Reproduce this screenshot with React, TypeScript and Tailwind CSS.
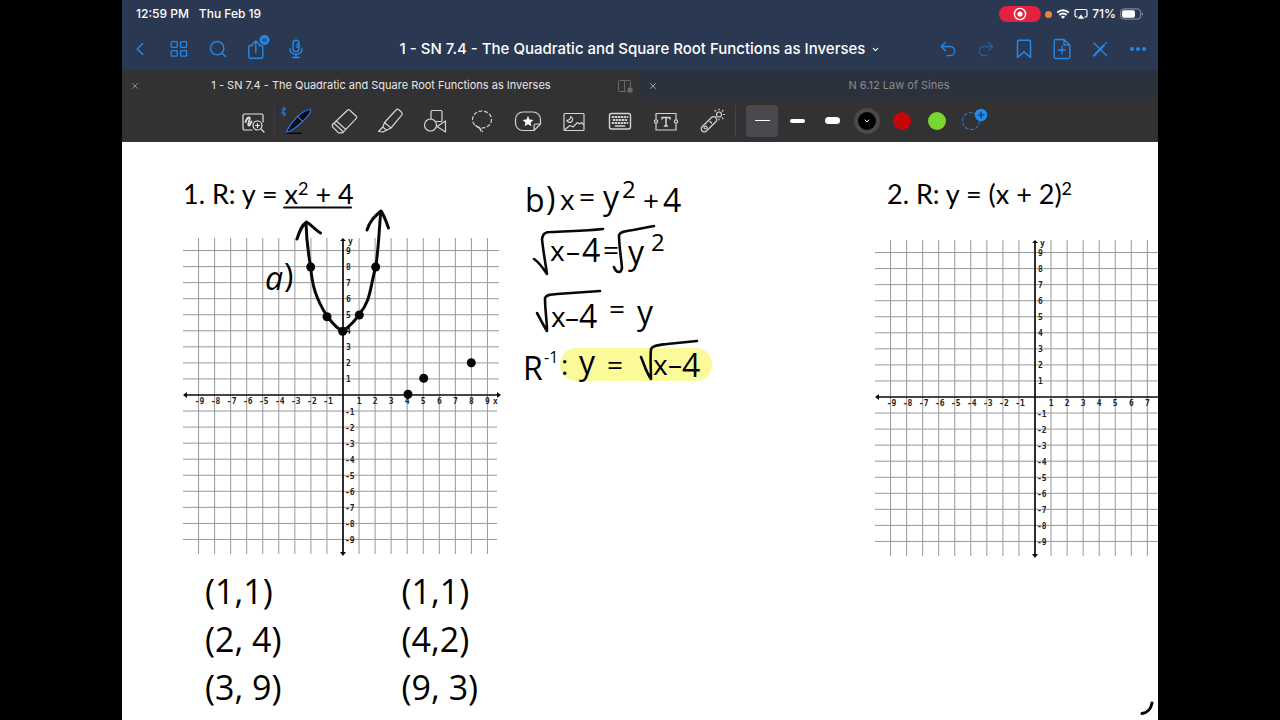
import type { ReactNode } from "react";
import { ChevronDown, ChevronLeft, Redo2, Search, Undo2, X } from "lucide-react";

const NavButton = ({ label, children }: { label: string; children: ReactNode }) => (
  <button aria-label={label} className="flex h-9 w-9 items-center justify-center text-[#2488e6]">
    {children}
  </button>
);

const ToolButton = ({ label, children }: { label: string; children: ReactNode }) => (
  <button aria-label={label} className="flex h-8 w-[46px] items-center justify-center text-[#d4d4d6]">
    {children}
  </button>
);

const Drawing = ({ children }: { children: ReactNode }) => (
  <svg
    width="32"
    height="32"
    viewBox="0 0 32 32"
    fill="none"
    stroke="currentColor"
    strokeWidth="1.2"
    strokeLinecap="round"
    strokeLinejoin="round"
  >
    {children}
  </svg>
);

const StatusBar = () => (
  <div className="flex h-7 items-center justify-between px-3.5 text-xs font-medium text-white">
    <div className="flex gap-2.5">
      <span>12:59 PM</span>
      <span>Thu Feb 19</span>
    </div>
    <div className="flex items-center gap-1">
      <span className="flex h-4 w-[42px] items-center justify-center rounded-full bg-[#e5223f]">
        <svg width="14" height="14" viewBox="0 0 14 14" fill="none" stroke="white" strokeWidth="1.4">
          <circle cx="7" cy="7" r="5.6" />
          <circle cx="7" cy="7" r="2.6" fill="white" stroke="none" />
        </svg>
      </span>
      <span className="h-[7px] w-[7px] rounded-full bg-[#e8843c]" />
      <svg width="14" height="12" viewBox="0 0 14 12" fill="none" stroke="white" strokeWidth="1.8">
        <path d="M1.2 4.6a8.3 8.3 0 0 1 11.6 0M3.4 7a5.1 5.1 0 0 1 7.2 0" />
        <path d="M7 10.8 4.9 8.9a3 3 0 0 1 4.2 0z" fill="white" stroke="none" />
      </svg>
      <svg width="14" height="12" viewBox="0 0 14 12" fill="none" stroke="white" strokeWidth="1.2">
        <path d="M3.6 9H2.4A1.4 1.4 0 0 1 1 7.6V2.9A1.4 1.4 0 0 1 2.4 1.5h9.2A1.4 1.4 0 0 1 13 2.9v4.7A1.4 1.4 0 0 1 11.6 9h-1.2" />
        <path d="m7 6.600 3.200 4.200H3.800z" fill="white" stroke="none" />
      </svg>
      <span>71%</span>
      <svg width="24" height="12" viewBox="0 0 24 12">
        <rect x="0.6" y="0.9" width="20" height="10.2" rx="3.2" fill="none" stroke="#8d96a5" />
        <rect x="2" y="2.3" width="13" height="7.4" rx="2" fill="white" />
        <path d="M22 4.200v3.600a2 2 0 0 0 0-3.600" fill="#8d96a5" />
      </svg>
    </div>
  </div>
);

const NavBar = () => (
  <nav className="grid h-[42px] grid-cols-[1fr_auto_1fr] items-center">
    <div className="flex gap-[3px]">
      <NavButton label="Back">
        <ChevronLeft size={22} strokeWidth={1.6} />
      </NavButton>
      <NavButton label="Thumbnails">
        <svg width="18" height="18" viewBox="0 0 18 18" fill="none" stroke="currentColor" strokeWidth="1.3">
          <rect x="1.2" y="1.7" width="6" height="5.6" rx="0.8" />
          <rect x="10.6" y="1.7" width="6" height="5.6" rx="0.8" />
          <rect x="1.2" y="10.6" width="6" height="5.6" rx="0.8" />
          <rect x="10.6" y="10.6" width="6" height="5.6" rx="0.8" />
        </svg>
      </NavButton>
      <NavButton label="Search">
        <Search size={20} strokeWidth={1.7} />
      </NavButton>
      <NavButton label="Share">
        <svg width="30" height="30" viewBox="0 0 30 30" fill="none" stroke="currentColor" strokeWidth="1.4" strokeLinecap="round" strokeLinejoin="round">
          <path d="M10.500 11.500H8.300a1.500 1.500 0 0 0-1.500 1.500v9.300a2 2 0 0 0 2 2h10a2 2 0 0 0 2-2V13a1.500 1.500 0 0 0-1.500-1.500h-2.200M13.800 18.500V7.200M10.500 10.200l3.300-3.300 3.300 3.300" />
          <circle cx="22.5" cy="6" r="5" fill="#2488e6" stroke="none" />
          <path d="M20.500 5h4M20.500 7h4" stroke="#2a3852" strokeWidth="1" />
        </svg>
      </NavButton>
      <NavButton label="Record audio">
        <svg width="16" height="20" viewBox="0 0 16 20" fill="none" stroke="currentColor" strokeWidth="1.4" strokeLinecap="round">
          <rect x="5" y="1.3" width="6" height="11.4" rx="3" />
          <path d="M2 9.500v.8a6 5.200 0 0 0 12 0v-.8M8 15.600v2.800M4.500 18.500h7M8.500 5.500h2M8.500 8h2" />
        </svg>
      </NavButton>
    </div>
    <h1 className="flex items-center gap-1.5 text-[15px] font-medium text-white">
      1 - SN 7.4 - The Quadratic and Square Root Functions as Inverses
      <ChevronDown size={9} strokeWidth={3} />
    </h1>
    <div className="flex justify-end gap-[2px] pr-[2px]">
      <NavButton label="Undo">
        <Undo2 size={20} strokeWidth={1.6} />
      </NavButton>
      <NavButton label="Redo">
        <Redo2 size={20} strokeWidth={1.6} className="text-[#275d99]" />
      </NavButton>
      <NavButton label="Bookmark">
        <svg width="16" height="20" viewBox="0 0 16 20" fill="none" stroke="currentColor" strokeWidth="1.5" strokeLinejoin="round">
          <path d="M1.500 2.500a1.300 1.300 0 0 1 1.300-1.300h10.400a1.300 1.300 0 0 1 1.300 1.300v16L8 12.700l-6.500 5.800z" />
        </svg>
      </NavButton>
      <NavButton label="Add page">
        <svg width="18" height="22" viewBox="0 0 18 22" fill="none" stroke="currentColor" strokeWidth="1.4" strokeLinecap="round" strokeLinejoin="round">
          <path d="M11 1.500H3A1.800 1.800 0 0 0 1.200 3.300v15.400A1.800 1.800 0 0 0 3 20.500h12a1.800 1.800 0 0 0 1.800-1.800V7zV7h5.800M9 8.500v7M5.500 12h7" />
        </svg>
      </NavButton>
      <NavButton label="Read only mode">
        <svg width="18" height="18" viewBox="0 0 18 18" fill="none" stroke="currentColor" strokeLinecap="round">
          <path d="M3 3l12.500 12.500" strokeWidth="1.4" />
          <path d="M4 14.500 13 5.200" strokeWidth="2.2" />
          <path d="M2.500 16l1.500-1.500M14.600 3.500l.6-.6" strokeWidth="1.6" />
        </svg>
      </NavButton>
      <NavButton label="More">
        <svg width="18" height="6" viewBox="0 0 18 6" fill="currentColor">
          <circle cx="3" cy="3" r="2" />
          <circle cx="9" cy="3" r="2" />
          <circle cx="15" cy="3" r="2" />
        </svg>
      </NavButton>
    </div>
  </nav>
);

const Tabs = () => (
  <div className="grid h-[29px] grid-cols-2 bg-[#323133] text-[11px]">
    <div className="grid grid-cols-[32px_1fr_32px] items-center pt-0.5 text-[#e6e6e8]">
      <button aria-label="Close tab" className="flex pl-2 text-[#9b9b9d]">
        <X size={10} strokeWidth={2} />
      </button>
      <a href="#quadratic" className="text-center">
        1 - SN 7.4 - The Quadratic and Square Root Functions as Inverses
      </a>
      <button aria-label="Split view" className="pl-2 text-[#69696c]">
        <svg width="18" height="14" viewBox="0 0 18 14" fill="none" stroke="currentColor">
          <path d="M14.500 8V2.500a1 1 0 0 0-1-1h-10a1 1 0 0 0-1 1v9a1 1 0 0 0 1 1H10M8.500 1.500v11" />
          <circle cx="14" cy="11" r="2.7" fill="currentColor" stroke="none" />
        </svg>
      </button>
    </div>
    <div className="grid grid-cols-[32px_1fr_32px] items-center rounded-bl-md bg-[#2c323d] pt-0.5 text-[#858b95]">
      <button aria-label="Close tab" className="flex pl-2 text-[#b0b4ba]">
        <X size={10} strokeWidth={2} />
      </button>
      <a href="#sines" className="text-center">
        N 6.12 Law of Sines
      </a>
    </div>
  </div>
);

const Toolbar = () => (
  <div className="flex h-[43px] items-center bg-[#323133] pl-[110px]">
    <button aria-label="Zoom window" className="flex h-8 w-[42px] items-center justify-center text-[#e4e4e6]">
      <Drawing>
        <path d="M15 25H7.500A1.500 1.500 0 0 1 6 23.500v-13A1.500 1.500 0 0 1 7.500 9h17a1.500 1.500 0 0 1 1.500 1.500V17" />
        <path d="M8.500 17c1-3 2.500-4.500 3.500-4.500s1 1.500 0 4-1 4 0 4 1.500-2 2.500-4" strokeWidth="1.8" />
        <circle cx="20.5" cy="20.5" r="4.5" />
        <path d="m24 24 3 3M18.500 20.500h4M20.500 18.500v4" />
      </Drawing>
    </button>
    <span className="h-8 w-px bg-[#3b3a3d]" />
    <ToolButton label="Pen">
      <svg width="36" height="32" viewBox="0 0 36 32" fill="none" strokeLinecap="round" strokeLinejoin="round">
        <path d="M1.500 4.500 5.500 9 3.500 11V2l2 2.200-4 4.300" stroke="#2a6fd6" strokeWidth="1.1" />
        <path d="M6.500 27.500C7.500 24 11 18.500 16 13 21.500 7 28.500 3.500 30.500 4.800 31.500 6.800 27 12.500 21.500 17.500 15.500 23 10 27 6.500 27.500z" fill="#060c18" stroke="#2b76dd" strokeWidth="1.2" />
        <path d="m18 11.500 4 4.500" stroke="#7fa7e8" strokeWidth="1" />
        <path d="M7 28.300h14" stroke="#0a0a0a" strokeWidth="1.4" />
      </svg>
    </ToolButton>
    <ToolButton label="Eraser">
      <Drawing>
        <path d="M19.500 5.200a1.600 1.600 0 0 1 2.300 0l6.500 6a1.600 1.600 0 0 1 0 2.200L14.500 27.800h-4L4.300 21.500v-1.800zM8 15.800l9.800 8.700M6 18.200l9.500 8.800" />
      </Drawing>
    </ToolButton>
    <ToolButton label="Highlighter">
      <Drawing>
        <path d="m10.500 17.500 11.500-12.500a2 2 0 0 1 2.800-.2l2.700 2.500a2 2 0 0 1 .2 2.800L17 23zM10.500 17.500 8.800 22l3.700 3.200 4.500-2.200M8.800 22l-4.300 4.500 5 .3 3-1.600" />
      </Drawing>
    </ToolButton>
    <ToolButton label="Shapes">
      <Drawing>
        <path d="M11 14V6.500a1 1 0 0 1 1-1h9a1 1 0 0 1 1 1v9a1 1 0 0 1-1 1h-4.500" />
        <circle cx="10.5" cy="20" r="6" />
        <path d="M25.500 16v11l-8.500-5.500z" />
      </Drawing>
    </ToolButton>
    <ToolButton label="Lasso">
      <Drawing>
        <ellipse cx="16" cy="14.5" rx="9.5" ry="8.5" strokeDasharray="3 2.600" />
        <path d="M9.500 20.500c3 1 5 3 5.500 6.500M13 22.500l3.500 4" strokeDasharray="3 2" />
      </Drawing>
    </ToolButton>
    <ToolButton label="Elements">
      <Drawing>
        <path d="M22 25.500H11A7.500 7.500 0 0 1 3.500 18v-3.500A7.500 7.500 0 0 1 11 7h10a7.500 7.500 0 0 1 7.500 7.500V19zM22 25.500V21a2 2 0 0 1 2-2h4.500" />
        <path d="m16 11 1.600 3.500 3.800.4-2.900 2.600.9 3.700-3.400-1.900-3.400 1.900.9-3.700-2.900-2.600 3.800-.4z" fill="white" stroke="none" />
      </Drawing>
    </ToolButton>
    <ToolButton label="Image">
      <Drawing>
        <rect x="6" y="8.500" width="20" height="17" rx="1" />
        <path d="m7 24.500 5-4 3 1.500 4.500-4.500 2 1.500 2-1.500 2 2M12.500 11.500a3 3 0 1 1-3.700 3.800c2.500.3 3.800-1.500 3.700-3.800z" />
      </Drawing>
    </ToolButton>
    <ToolButton label="Keyboard">
      <Drawing>
        <rect x="5.5" y="8.500" width="21" height="15.5" rx="2" strokeWidth="1.4" />
        <path d="M8.500 12h15M9.500 15h14M8.500 18h15" strokeWidth="1.9" strokeDasharray="0.900 2.100" />
        <path d="M11.500 21h9" strokeWidth="1.7" />
      </Drawing>
    </ToolButton>
    <ToolButton label="Text box">
      <Drawing>
        <path d="M6 14V8.500h20V14M6 19v6h20v-6" />
        <path d="M12 12.500h8M16 12.500v8.500M12 12.500v1.500M20 12.500v1.500M14.500 21h3" strokeWidth="1.5" />
        <circle cx="6" cy="16.5" r="1.6" />
        <circle cx="26" cy="16.5" r="1.6" />
      </Drawing>
    </ToolButton>
    <ToolButton label="Laser pointer">
      <Drawing>
        <path d="M15.500 12.500a3 3 0 0 1 4.300 0 3 3 0 0 1 0 4.300L10.500 26a3 3 0 0 1-4.400 0 3 3 0 0 1 0-4.300z" />
        <circle cx="9.500" cy="22.5" r="1.5" />
        <circle cx="23" cy="9.500" r="2.5" />
        <path d="M23 4v1M27 5.500l-.7.700M28.500 9.500h-1M27 13.500l-.7-.7M19 5.500l.7.700M14 16.500l1.500 1.500M23 14v.8" />
      </Drawing>
    </ToolButton>
    <span className="h-8 w-px bg-[#464548]" />
    <div className="ml-2.5 flex items-center gap-[3px]">
      <button aria-label="Thin stroke" className="flex h-8 w-8 items-center justify-center rounded bg-[#4a494d]">
        <span className="h-px w-[15px] bg-white" />
      </button>
      <button aria-label="Medium stroke" className="flex h-8 w-8 items-center justify-center">
        <span className="h-1 w-[15px] rounded-full bg-white" />
      </button>
      <button aria-label="Thick stroke" className="flex h-8 w-8 items-center justify-center">
        <span className="h-[7px] w-[15px] rounded-full bg-white" />
      </button>
      <button aria-label="Black" className="flex h-8 w-8 items-center justify-center">
        <span className="flex h-[26px] w-[26px] items-center justify-center rounded-full border-4 border-[#4a494c] bg-black text-white">
          <ChevronDown size={8} strokeWidth={3} />
        </span>
      </button>
      <button aria-label="Red" className="flex h-8 w-8 items-center justify-center">
        <span className="h-[18px] w-[18px] rounded-full bg-[#c40606]" />
      </button>
      <button aria-label="Green" className="flex h-8 w-8 items-center justify-center">
        <span className="h-[18px] w-[18px] rounded-full bg-[#77d62f]" />
      </button>
      <button aria-label="Add colour" className="flex h-8 w-8 items-center justify-center">
        <Drawing>
          <circle cx="15" cy="16" r="8.500" stroke="#2b6fc0" strokeDasharray="3 2.400" />
          <circle cx="25" cy="10" r="6.2" fill="#1f8cf2" stroke="none" />
          <path d="M22 10h6M25 7v6" stroke="#16324f" />
        </Drawing>
      </button>
    </div>
  </div>
);

const ticks = [-9, -8, -7, -6, -5, -4, -3, -2, -1, 1, 2, 3, 4, 5, 6, 7, 8, 9];
const step = 16.05;

// Coordinate plane with its origin at 160,158. xMax is the last number on the x axis.
const Plane = ({ label, xMax = 9, children }: { label: string; xMax?: number; children?: ReactNode }) => (
  <svg role="img" aria-label={label} width="320" height="320" viewBox="0 0 320 320" className="block shrink-0 overflow-visible">
    <g stroke="#999999" strokeWidth="1">
      {ticks.map((n) => (
        <g key={n}>
          <line x1={160 + n * step} x2={160 + n * step} y1="1" y2="317" />
          <line x1="0" x2={n > 0 ? 316 : 314} y1={158 - n * step} y2={158 - n * step} />
        </g>
      ))}
    </g>
    <path d="M2 158h314M160 3v313" stroke="#0a0a0a" strokeWidth="1.7" />
    <path d="M0 158l4-3v6zM318 158l-4-3v6zM160 1l-3 3h6zM160 319l-3-4h6z" fill="#0a0a0a" />
    <g className="fill-[#222222] font-['DejaVu_Sans_Mono',monospace] text-[8px] font-bold">
      {ticks.filter((n) => n <= xMax).map((n) => (
        <text key={n} x={160 + n * step + (n < 0 ? 1 : 0)} y="167" textAnchor="middle">
          {n}
        </text>
      ))}
      {ticks.map((n) => (
        <text key={n} x={n > 0 ? 163 : 162} y={(n > 0 ? 161 : 162) - n * step}>
          {n}
        </text>
      ))}
      <text x="165" y="7">y</text>
      {xMax === 9 && <text x="310" y="167">x</text>}
    </g>
    {children}
  </svg>
);

const points = [
  [127.7, 30],
  [144, 79.7],
  [159.7, 94.3],
  [176.3, 78],
  [192.7, 30],
  [288.3, 125.7],
  [240.7, 141.3],
  [225, 157.3],
];

const PlottedCurve = () => (
  <>
    <g fill="none" stroke="#080808" strokeWidth="3" strokeLinecap="round" strokeLinejoin="round">
      <path d="M101 -29.500H168" strokeWidth="2" />
      <path d="M123 -14C123.500 5 125.500 18 127.700 30C129 48 133 62 144 79C150 87 155 93 160 94C167 89 172 84 176.300 77C188 64 187 50 192.700 30C195.500 12 195.500 2 197.700 -25" />
      <path d="M114 2C117 -7 119 -12 123.500 -15C129 -12 132 -7 137.500 -4" />
      <path d="M184 -7C187 -16 191 -20 198 -26C201 -22 203 -16 205.500 -9" />
    </g>
    {points.map(([x, y]) => (
      <circle key={x} cx={x} cy={y} r="4.5" fill="#050505" />
    ))}
    <g className="fill-black font-['Open_Sans',sans-serif] text-[32px]">
      <text x="82" y="53" className="italic">a</text>
      <text x="101" y="50">)</text>
    </g>
  </>
);

// Handwritten symbols: [text, x, baseline]
type Symbol = [string, number, number];

const large: Symbol[] = [
  ["b", 2, 36], [")", 23, 34], ["y", 80, 33], ["4", 140, 36],
  ["4", 59, 86], ["y", 105, 88],
  ["4", 56, 152], ["y", 114, 148],
  ["R", 0, 204], ["y", 56, 198], ["4", 159, 201],
];
const medium: Symbol[] = [
  ["x", 37, 34], ["=", 56, 31], ["+", 120, 35],
  ["x", 27, 85], ["–", 43, 85], ["=", 80, 84],
  ["x", 28, 151], ["–", 42, 151], ["=", 86, 143],
  [":", 38, 199], ["=", 84, 199], ["x", 130, 199], ["–", 145, 198],
];
const squares: Symbol[] = [
  ["2", 99, 22], ["2", 128, 75],
];

const Ink = ({ symbols }: { symbols: Symbol[] }) => (
  <>
    {symbols.map(([text, x, y]) => (
      <text key={`${x}-${y}`} x={x} y={y}>
        {text}
      </text>
    ))}
  </>
);

const Working = () => (
  <svg role="img" aria-label="Inverse working" width="200" height="220" viewBox="0 0 200 220" className="block overflow-visible">
    <rect x="37" y="172" width="152" height="33" rx="16" fill="#fafa9b" />
    <g fill="none" stroke="#080808" strokeWidth="2.6" strokeLinecap="round" strokeLinejoin="round">
      <path d="M11 83C16 86 20 92 24 98C22 84 20 74 19 63C20 57 23 56 28 56C44 55 62 55 80 53" />
      <path d="M91 91C93 97 98 98 99 92C98 80 96 70 96 59C98 55 104 55 110 54L131 50" />
      <path d="M14 137C17 142 20 149 24 155C24 145 22 134 22 122C24 118 28 119 34 118C48 117 62 116 77 115" />
      <path d="M118 181C121 188 123 196 128 203C128 192 127 182 128 173C130 169 136 169 144 168L174 165" />
    </g>
    <g className="fill-black font-['Open_Sans',sans-serif] text-[32px]">
      <Ink symbols={large} />
    </g>
    <g className="fill-black font-['Open_Sans',sans-serif] text-[28px]">
      <Ink symbols={medium} />
    </g>
    <g className="fill-black font-['Open_Sans',sans-serif] text-[24px]">
      <Ink symbols={squares} />
    </g>
    <text x="21" y="187" className="fill-black font-['Open_Sans',sans-serif] text-[16px]">
      -1
    </text>
  </svg>
);

const Heading = ({ children }: { children: ReactNode }) => (
  <h2 className="mb-[25px] h-9 whitespace-nowrap font-[Lato,sans-serif] text-[27px] leading-9 text-black">{children}</h2>
);

const Page = () => (
  <main className="relative flex flex-1 overflow-hidden bg-white pl-[61px] pt-[34px]">
    <section className="w-[340px] shrink-0">
      <Heading>
        1. R: y = x<sup className="text-[18px] leading-none">2</sup> + 4
      </Heading>
      <Plane label="Graph of y = x squared plus 4">
        <PlottedCurve />
      </Plane>
      <div className="flex gap-[120px] pl-[22px] pt-2.5 font-['Open_Sans',sans-serif] text-[34px] leading-[48px] text-black">
        <ul>
          <li>(1,1)</li>
          <li>(2, 4)</li>
          <li>(3, 9)</li>
        </ul>
        <ul>
          <li>(1,1)</li>
          <li>(4,2)</li>
          <li>(9, 3)</li>
        </ul>
      </div>
    </section>
    <section className="w-[352px] shrink-0">
      <Working />
    </section>
    <section className="min-w-0 flex-1">
      <div className="pl-3">
        <Heading>
          2. R: y = (x + 2)<sup className="text-[18px] leading-none">2</sup>
        </Heading>
      </div>
      <div className="pt-[2px]">
        <Plane label="Empty coordinate plane" xMax={7} />
      </div>
    </section>
    <svg className="absolute bottom-1 right-1" width="14" height="16" viewBox="0 0 14 16" fill="none" stroke="black" strokeWidth="3" strokeLinecap="round">
      <path d="M2 13.500C7 13 11 9 12 3" />
    </svg>
  </main>
);

export default function App() {
  return (
    <div className="min-h-screen bg-black px-[122px] font-[Inter,sans-serif]">
      <div className="flex h-screen flex-col overflow-hidden">
        <header className="bg-[#2a3852]">
          <StatusBar />
          <NavBar />
          <Tabs />
          <Toolbar />
        </header>
        <Page />
      </div>
    </div>
  );
}
